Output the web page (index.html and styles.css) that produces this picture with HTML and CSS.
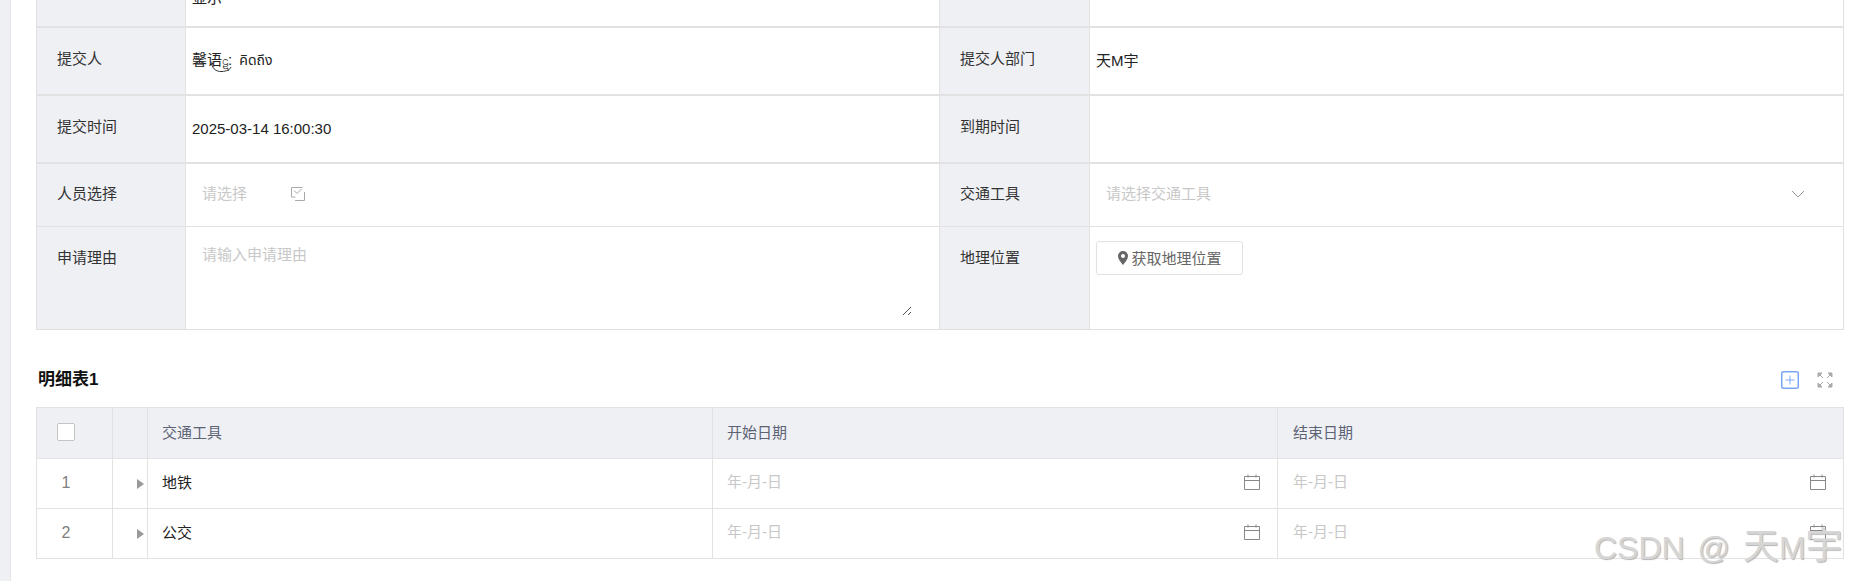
FILE: index.html
```html
<!DOCTYPE html>
<html lang="zh-CN">
<head>
<meta charset="utf-8">
<title>表单</title>
<link rel="stylesheet" href="styles.css">
</head>
<body>
<div class="page">
  <aside class="rail"></aside>
  <main class="content">
    <section class="form">
      <div class="row row-top">
        <div class="label"></div>
        <div class="value value-cut">显示</div>
        <div class="label"></div>
        <div class="value"></div>
      </div>
      <div class="row row-info">
        <div class="label">提交人</div>
        <div class="value"><span class="signature">馨语<span class="myan">ဋ</span>: <span class="thai">คิดถึง</span><svg class="swoosh" viewBox="0 0 22 12" fill="none" stroke="#333" stroke-width="1"><path d="M1 .5C0 6 4 11 11 10.500c4-.3 8-1.500 9-4.500"/></svg></span></div>
        <div class="label">提交人部门</div>
        <div class="value">天M宇</div>
      </div>
      <div class="row row-info">
        <div class="label">提交时间</div>
        <div class="value">2025-03-14 16:00:30</div>
        <div class="label">到期时间</div>
        <div class="value"></div>
      </div>
      <div class="row row-select">
        <div class="label">人员选择</div>
        <div class="value picker">
          <span class="placeholder picker-text">请选择</span>
          <svg class="icon-pick" viewBox="0 0 14 14" fill="none" stroke="#aaa" stroke-width="1"><path d="M11.500 .5H.5v9.500h4"/><path d="M3 3.500l3 3 4.500-4.500"/><path d="M13.500 5v8.500H4"/></svg>
        </div>
        <div class="label">交通工具</div>
        <div class="value select">
          <span class="placeholder">请选择交通工具</span>
          <svg class="icon-chevron" viewBox="0 0 14 8" fill="none" stroke="#999" stroke-width="1"><path d="M1 1l6 6 6-6"/></svg>
        </div>
      </div>
      <div class="row row-area">
        <div class="label label-top">申请理由</div>
        <div class="value area">
          <span class="placeholder">请输入申请理由</span>
          <svg class="icon-resize" viewBox="0 0 10 10" fill="none" stroke="#555" stroke-width="1"><path d="M1 9l8-8M6 9l3-3"/></svg>
        </div>
        <div class="label label-top">地理位置</div>
        <div class="value geo">
          <button class="geo-btn" type="button">
            <svg class="icon-pin" viewBox="0 0 12 14"><path fill="#666" fill-rule="evenodd" d="M6 0a5 5 0 0 1 5 5c0 3.500-5 9-5 9S1 8.500 1 5a5 5 0 0 1 5-5zm0 3a2 2 0 1 0 0 4 2 2 0 0 0 0-4z"/></svg>获取地理位置
          </button>
        </div>
      </div>
    </section>

    <section class="detail">
      <header class="detail-head">
        <h2 class="detail-title">明细表1</h2>
        <div class="detail-tools">
          <svg class="icon-add" viewBox="0 0 18 18" fill="none" stroke="#7aa7f5"><rect x="0.750" y="0.750" width="16.500" height="16.500" rx="1.500" stroke-width="1.500"/><path d="M4.500 9h9M9 4.500v9"/></svg>
          <svg class="icon-expand" viewBox="0 0 16 16" fill="#aaa" stroke="#aaa" stroke-width="1"><path d="M1 1h4L1 5zM15 1h-4l4 4zM1 15h4l-4-4zM15 15h-4l4-4z"/><path d="M2 2l4 4M14 2l-4 4M2 14l4-4M14 14l-4-4" fill="none"/></svg>
        </div>
      </header>
      <div class="grid">
        <div class="gcell head center head-check"><span class="checkbox"></span></div>
        <div class="gcell head"></div>
        <div class="gcell head pad head-text">交通工具</div>
        <div class="gcell head pad head-text">开始日期</div>
        <div class="gcell head pad pad-last head-text">结束日期</div>

        <div class="gcell center num">1</div>
        <div class="gcell caret-cell"><span class="caret"></span></div>
        <div class="gcell pad text">地铁</div>
        <div class="gcell pad date"><span class="placeholder">年-月-日</span><svg class="icon-cal" viewBox="0 0 16 16" fill="none" stroke="#888"><path d="M.5 2.500h15v13H.5zM.5 6.500h15M4 .5v3M12 .5v3"/></svg></div>
        <div class="gcell pad pad-last date"><span class="placeholder">年-月-日</span><svg class="icon-cal" viewBox="0 0 16 16" fill="none" stroke="#888"><path d="M.5 2.500h15v13H.5zM.5 6.500h15M4 .5v3M12 .5v3"/></svg></div>

        <div class="gcell center num">2</div>
        <div class="gcell caret-cell"><span class="caret"></span></div>
        <div class="gcell pad text">公交</div>
        <div class="gcell pad date"><span class="placeholder">年-月-日</span><svg class="icon-cal" viewBox="0 0 16 16" fill="none" stroke="#888"><path d="M.5 2.500h15v13H.5zM.5 6.500h15M4 .5v3M12 .5v3"/></svg></div>
        <div class="gcell pad pad-last date"><span class="placeholder">年-月-日</span><svg class="icon-cal" viewBox="0 0 16 16" fill="none" stroke="#888"><path d="M.5 2.500h15v13H.5zM.5 6.500h15M4 .5v3M12 .5v3"/></svg></div>
      </div>
    </section>
  </main>
</div>
<div class="watermark">CSDN @ <span class="wm-tian">天</span>M<span class="wm-yu">宇</span></div>
</body>
</html>
```
FILE: styles.css
```css
* { box-sizing: border-box; }
html, body { margin: 0; height: 100%; }
body {
  overflow: hidden;
  background: #fff;
  color: #222;
  font: 15px/1.4 "Liberation Sans", "Noto Sans CJK SC", "Noto Sans Thai", "Noto Sans", sans-serif;
}
.page { display: flex; height: 581px; }
.rail { flex: 0 0 11px; background: #eff0f4; border-right: 1px solid #e4e5e9; }
.content { flex: 0 0 1808px; margin-left: 25px; margin-top: -42px; }

.form { border-left: 1px solid #e0e0e0; border-right: 1px solid #e0e0e0; border-bottom: 1px solid #e0e0e0; }
.row { display: grid; grid-template-columns: 149px 754px 150px 1fr; border-bottom: 2px solid #e2e2e2; }
.row-top { height: 70px; }
.row-info { height: 68px; }
.row-select { height: 63px; border-bottom-width: 1px; }
.row-area { height: 102px; border-bottom: 0; }

.label {
  display: flex;
  align-items: center;
  padding-left: 20px;
  background: #eff0f4;
  border-right: 1px solid #e2e2e2;
  color: #333;
}
.row-info .label { padding-bottom: 6px; }
.row-info .value { padding-bottom: 2px; }
.row-select .label, .row-select .value { padding-bottom: 3px; }
.label-top { align-items: flex-start; padding-top: 20px; }
.value { display: flex; align-items: center; padding-left: 6px; border-right: 1px solid #e2e2e2; min-width: 0; }
.value:last-child { border-right: 0; }
.value-cut { align-items: flex-end; line-height: 20px; padding-bottom: 18px; }
.placeholder { color: #c8c8c8; }
.signature { position: relative; }
.myan { font-size: 12px; }
.thai { font-size: 14px; margin-left: 3px; }
.swoosh { position: absolute; left: 19px; top: 12px; width: 22px; height: 12px; }

.picker { padding-left: 16px; }
.picker-text { width: 89px; }
.icon-pick { width: 14px; height: 14px; }
.select { justify-content: space-between; padding-left: 16px; padding-right: 38px; }
.icon-chevron { width: 14px; height: 8px; }
.area { position: relative; align-items: flex-start; padding: 17px 0 0 16px; }
.icon-resize { position: absolute; right: 27px; bottom: 13px; width: 10px; height: 10px; }
.geo { align-items: flex-start; padding-top: 14px; }
.geo-btn {
  display: flex;
  align-items: center;
  justify-content: center;
  gap: 2px;
  width: 147px;
  height: 34px;
  padding: 0;
  background: #fff;
  border: 1px solid #e2e2e2;
  border-radius: 3px;
  color: #666;
  font: inherit;
}
.icon-pin { width: 12px; height: 14px; }

.detail-head { display: flex; align-items: center; justify-content: space-between; height: 77px; padding-top: 22px; }
.detail-title { margin: 0 0 0 2px; font-size: 17px; font-weight: 700; color: #111; }
.detail-tools { display: flex; align-items: center; gap: 18px; margin-right: 11px; }
.icon-add { width: 18px; height: 18px; }
.icon-expand { width: 16px; height: 16px; }

.grid {
  display: grid;
  grid-template-columns: 76px 35px 565px 565px 566px;
  grid-template-rows: 51px 50px 50px;
  border-top: 1px solid #e2e2e2;
  border-left: 1px solid #e2e2e2;
}
.gcell { display: flex; align-items: center; border-right: 1px solid #e2e2e2; border-bottom: 1px solid #e2e2e2; min-width: 0; }
.head { background: #eff0f4; color: #5c6375; }
.head-text { padding-bottom: 2px; }
.head-check { padding-bottom: 2px; }
.center { justify-content: center; padding-right: 17px; }
.pad { padding-left: 14px; }
.pad-last { padding-left: 15px; }
.date { justify-content: space-between; padding-right: 17px; padding-bottom: 4px; }
.text { color: #222; padding-bottom: 3px; }
.num { color: #808080; font-size: 16px; padding-bottom: 1px; }
.checkbox { width: 18px; height: 18px; background: #fff; border: 1px solid #c4c4c4; border-radius: 2px; }
.caret-cell { justify-content: flex-end; padding-right: 3px; }
.caret { width: 0; height: 0; border-left: 7px solid #999; border-top: 5px solid transparent; border-bottom: 5px solid transparent; }
.icon-cal { width: 16px; height: 16px; }

.watermark {
  position: absolute;
  left: 1594px;
  top: 528px;
  font-size: 32px;
  line-height: 40px;
  white-space: nowrap;
  word-spacing: 4px;
  color: #d6d6d6;
  text-shadow: 1px 1px 1px #b4b4b4;
}
.wm-tian { font-size: 36px; line-height: 32px; }
.wm-yu { font-size: 37px; line-height: 32px; }
```
